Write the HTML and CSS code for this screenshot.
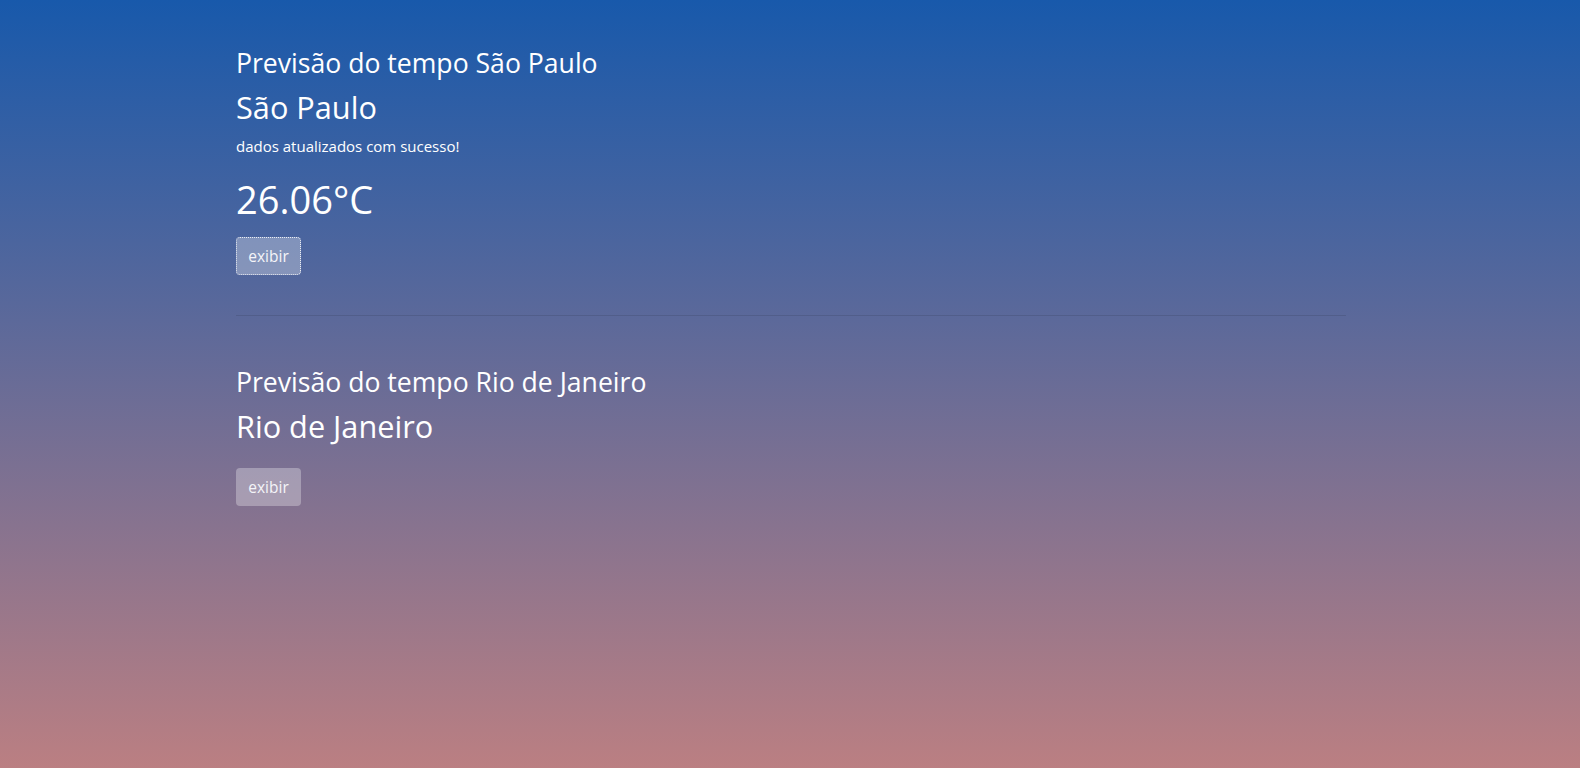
FILE: index.html
```html
<!DOCTYPE html>
<html lang="pt-BR">
<head>
<meta charset="utf-8">
<title>Previsão do tempo</title>
<link rel="stylesheet" href="styles.css">
</head>
<body>
<main class="container">
  <section class="forecast">
    <h3 class="forecast-title">Previsão do tempo São Paulo</h3>
    <h2 class="city">São Paulo</h2>
    <p class="status">dados atualizados com sucesso!</p>
    <h1 class="temp">26.06°C</h1>
    <button class="btn btn-focus" type="button">exibir</button>
  </section>
  <hr class="divider">
  <section class="forecast">
    <h3 class="forecast-title">Previsão do tempo Rio de Janeiro</h3>
    <h2 class="city">Rio de Janeiro</h2>
    <button class="btn btn-second" type="button">exibir</button>
  </section>
</main>
</body>
</html>
```
FILE: styles.css
```css
html, body {
  margin: 0;
  padding: 0;
}
body {
  min-height: 100vh;
  background: linear-gradient(to bottom, rgb(24, 89, 171) 0%, rgb(187, 127, 130) 100%);
  color: #fff;
  font-family: "Open Sans", "Noto Sans", sans-serif;
}
.container {
  width: 1112px;
  margin: 0 auto;
  padding: 46px 0 0 2px;
  box-sizing: border-box;
}
.forecast {
  display: flex;
  flex-direction: column;
  align-items: flex-start;
}
.forecast-title {
  margin: 0;
  font-size: 26.6px;
  line-height: 34px;
  font-weight: 400;
}
.city {
  margin: 7px 0 0;
  font-size: 30.7px;
  line-height: 40px;
  font-weight: 400;
}
.status {
  margin: 9px 0 0;
  font-size: 15px;
  line-height: 21px;
}
.temp {
  margin: 18px 0 0;
  font-size: 38px;
  line-height: 48px;
  font-weight: 400;
}
.btn {
  margin-top: 14px;
  width: 65px;
  height: 38px;
  border: 1px solid transparent;
  border-radius: 4px;
  background: rgba(255, 255, 255, 0.3);
  color: #f4f4f8;
  font-family: inherit;
  font-size: 15.5px;
  padding: 0;
}
.btn-focus {
  border: 1px dotted rgba(255, 255, 255, 0.85);
}
.btn-second {
  margin-top: 22px;
}
.divider {
  margin: 40px 0 49px;
  border: 0;
  border-top: 1px solid rgba(0, 0, 0, 0.1);
  height: 0;
}
```
